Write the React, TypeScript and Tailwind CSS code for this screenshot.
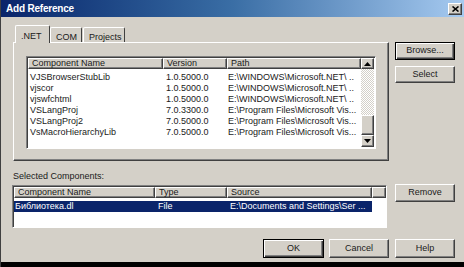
import React from "react";

type Row = { name: string; version: string; path: string };

const rows: Row[] = [
	{ name: "VJSBrowserStubLib", version: "1.0.5000.0", path: "E:\\WINDOWS\\Microsoft.NET\\ .." },
	{ name: "vjscor", version: "1.0.5000.0", path: "E:\\WINDOWS\\Microsoft.NET\\ .." },
	{ name: "vjswfchtml", version: "1.0.5000.0", path: "E:\\WINDOWS\\Microsoft.NET\\ .." },
	{ name: "VSLangProj", version: "7.0.3300.0", path: "E:\\Program Files\\Microsoft Vis..." },
	{ name: "VSLangProj2", version: "7.0.5000.0", path: "E:\\Program Files\\Microsoft Vis..." },
	{ name: "VsMacroHierarchyLib", version: "7.0.5000.0", path: "E:\\Program Files\\Microsoft Vis..." },
];

// classic raised 3D edge
const raised =
	"border-t border-l border-t-white border-l-white border-r border-b border-r-[#404040] border-b-[#404040] shadow-[inset_-1px_-1px_0_#808080]";
const sunken =
	"border-t border-l border-t-[#808080] border-l-[#808080] border-r border-b border-r-white border-b-white shadow-[inset_1px_1px_0_#404040]";

function Button({ label, isDefault, className = "" }: { label: string; isDefault?: boolean; className?: string }) {
	return (
		<div
			className={`flex items-center justify-center bg-[#d4d0c8] ${
				isDefault
					? "border border-black shadow-[inset_1px_1px_0_#ffffff,inset_-1px_-1px_0_#404040,inset_-2px_-2px_0_#808080]"
					: raised
			} ${className}`}
		>
			{label}
		</div>
	);
}

function HeaderCell({ label, className = "" }: { label: string; className?: string }) {
	return (
		<div className={`h-[11px] leading-[9px] pl-[3px] bg-[#d4d0c8] whitespace-nowrap overflow-hidden ${raised} ${className}`}>
			{label}
		</div>
	);
}

function Arrow({ up }: { up?: boolean }) {
	return (
		<svg width="7" height="4" viewBox="0 0 7 4">
			<path d={up ? "M3.5 0 L7 4 L0 4 Z" : "M0 0 L7 0 L3.5 4 Z"} fill="#000" />
		</svg>
	);
}

export default function App() {
	return (
		<div className="w-[464px] h-[267px] bg-[#d4d0c8] flex flex-col overflow-hidden border-l border-l-[#404040] font-['Liberation_Sans',Arial,sans-serif] text-[9px] text-[#1a1a1a]">
			{/* Title bar */}
			<div className="h-[17px] shrink-0 flex items-center justify-between pl-[5px] pr-[2px] bg-gradient-to-r from-[#0a246a] via-[#3a6ea5] to-[#a6caf0]">
				<span className="text-white font-bold text-[10px] tracking-[-0.2px]">Add Reference</span>
				<div className={`w-[14px] h-[12px] flex items-center justify-center bg-[#d4d0c8] ${raised}`}>
					<svg width="7" height="6" viewBox="0 0 7 6">
						<path d="M0.5 0.5 L6.5 5.5 M6.5 0.5 L0.5 5.5" stroke="#000" strokeWidth="1.6" />
					</svg>
				</div>
			</div>

			<div className="flex pl-[12px] pt-[8px]">
				{/* Left column */}
				<div className="w-[376px] flex flex-col">
					{/* Tabs */}
					<div className="h-[17px] flex items-end pl-[2px]">
						<div className="relative z-10 -mb-px w-[35px] h-[18px] pl-[5px] pt-[4px] bg-[#d4d0c8] border-t border-l border-t-white border-l-white border-r border-r-[#404040] rounded-t-[2px]">
							.NET
						</div>
						<div className="w-[32px] h-[15px] pl-[5px] pt-[3px] border-t border-l border-t-white border-l-white border-r border-r-[#404040] rounded-t-[2px]">
							COM
						</div>
						<div className="ml-[1px] w-[42px] h-[15px] pl-[5px] pt-[3px] border-t border-l border-t-white border-l-white border-r border-r-[#404040] rounded-t-[2px]">
							Projects
						</div>
					</div>

					{/* Tab panel */}
					<div className={`h-[119px] ${raised}`}>
						<div className={`ml-[12px] mt-[13px] w-[350px] h-[93px] bg-white flex ${sunken}`}>
							<div className="flex-1 flex flex-col pl-[1px] pt-[1px]">
								<div className="flex">
									<HeaderCell label="Component Name" className="w-[135px]" />
									<HeaderCell label="Version" className="w-[64px]" />
									<HeaderCell label="Path" className="flex-1" />
								</div>
								<div className="flex flex-col pt-[3px]">
									{rows.map((r) => (
										<div key={r.name} className="flex h-[11px] leading-[11px] whitespace-nowrap">
											<div className="w-[135px] pl-[2px]">{r.name}</div>
											<div className="w-[64px] pl-[3px]">{r.version}</div>
											<div className="flex-1 pl-[1px] overflow-hidden">{r.path}</div>
										</div>
									))}
								</div>
							</div>
							{/* Scrollbar */}
							<div className="w-[14px] flex flex-col pt-[1px] pb-[1px] pr-[1px]">
								<div className={`h-[11px] flex items-center justify-center bg-[#d4d0c8] ${raised}`}>
									<Arrow up />
								</div>
								<div className="flex-1 bg-[repeating-conic-gradient(#ffffff_0_25%,#d4d0c8_0_50%)] bg-size-[2px_2px]" />
								<div className={`h-[20px] bg-[#d4d0c8] ${raised}`} />
								<div className={`h-[12px] flex items-center justify-center bg-[#d4d0c8] ${raised}`}>
									<Arrow />
								</div>
							</div>
						</div>
					</div>

					<div className="mt-[9px] h-[12px] leading-[12px]">Selected Components:</div>

					{/* Selected list */}
					<div className={`mt-[3px] h-[43px] w-[375px] -ml-[1px] bg-white flex flex-col pl-[1px] pt-[1px] ${sunken}`}>
						<div className="flex">
							<HeaderCell label="Component Name" className="w-[141px]" />
							<HeaderCell label="Type" className="w-[72px]" />
							<HeaderCell label="Source" className="w-[145px]" />
							<HeaderCell label="" className="flex-1" />
						</div>
						<div className="mt-[3px] w-[358px] h-[11px] leading-[11px] flex bg-[#0a246a] text-white whitespace-nowrap">
							<div className="w-[141px] pl-[1px]">Библиотека.dl</div>
							<div className="w-[72px] pl-[3px]">File</div>
							<div className="flex-1 pl-[3px]">E:\Documents and Settings\Ser ...</div>
						</div>
					</div>
				</div>

				{/* Right column */}
				<div className="ml-[6px] w-[60px] flex flex-col pt-[17px]">
					<Button label="Browse..." isDefault className="h-[18px]" />
					<Button label="Select" className="mt-[6px] h-[17px]" />
					<Button label="Remove" className="mt-[101px] h-[18px]" />
				</div>
			</div>

			{/* Bottom buttons */}
			<div className="mt-[11px] flex justify-end pr-[9px]">
				<Button label="OK" isDefault className="w-[61px] h-[19px]" />
				<Button label="Cancel" className="ml-[5px] w-[60px] h-[19px]" />
				<Button label="Help" className="ml-[6px] w-[60px] h-[19px]" />
			</div>

			<div className="mt-auto h-[5px] bg-black" />
		</div>
	);
}
